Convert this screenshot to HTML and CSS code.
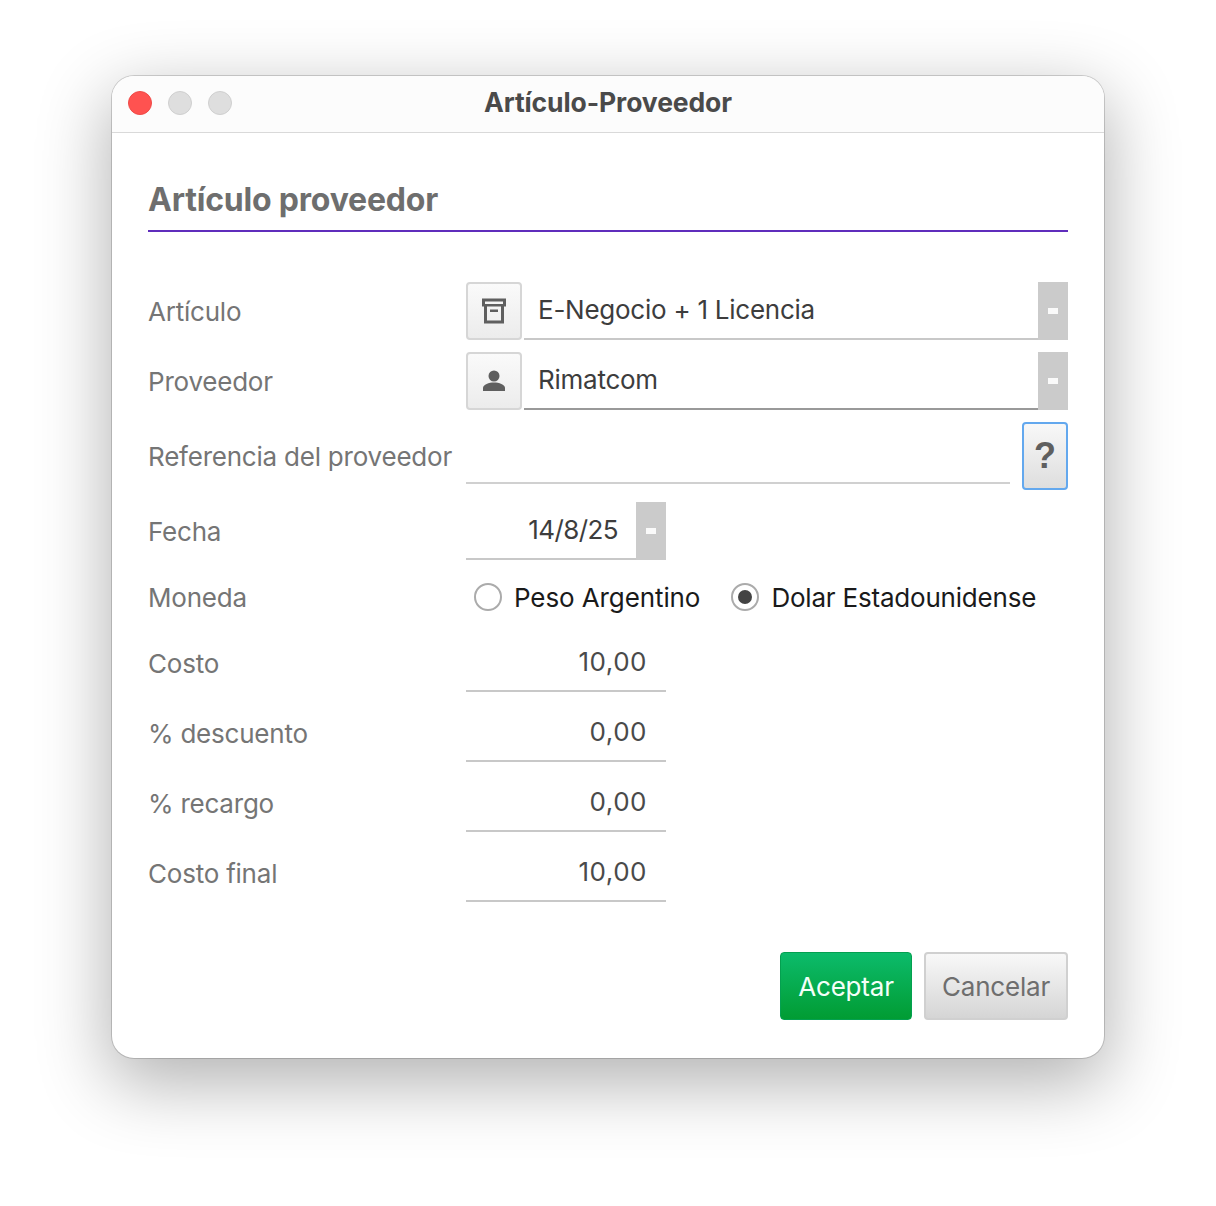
FILE: index.html
```html
<!DOCTYPE html>
<html lang="es">
<head>
<meta charset="utf-8">
<title>Artículo-Proveedor</title>
<link rel="stylesheet" href="styles.css">
</head>
<body>
<div class="window">
  <header class="titlebar">
    <div class="lights">
      <span class="light light-close"></span>
      <span class="light"></span>
      <span class="light"></span>
    </div>
    <div class="title">Artículo-Proveedor</div>
  </header>
  <main class="content">
    <h1 class="heading">Artículo proveedor</h1>
    <form class="form">
      <div class="label">Artículo</div>
      <div class="field-row">
        <button type="button" class="icon-btn">
          <svg width="26" height="26" viewBox="0 0 26 26"><path fill="#5f5f5f" fill-rule="evenodd" d="M1 0.500h24v8h-2v17H3v-17H1zM4 3.500v2.500h18V3.500zM6 8.500v14h14v-14zM9 11.500h8v2.500H9z"/></svg>
        </button>
        <div class="lookup lookup-light"><span class="lookup-text">E-Negocio + 1 Licencia</span><span class="clear"><i></i></span></div>
      </div>

      <div class="label">Proveedor</div>
      <div class="field-row">
        <button type="button" class="icon-btn">
          <svg width="26" height="26" viewBox="0 0 26 26"><circle cx="13" cy="8" r="5.500" fill="#5f5f5f"/><path fill="#5f5f5f" d="M2 23v-3c0-3.500 6-5.500 11-5.500S24 16.500 24 20v3z"/></svg>
        </button>
        <div class="lookup lookup-dark"><span class="lookup-text">Rimatcom</span><span class="clear"><i></i></span></div>
      </div>

      <div class="label label-ref">Referencia del proveedor</div>
      <div class="field-row ref-row">
        <div class="ref-input"></div>
        <button type="button" class="help-btn">?</button>
      </div>

      <div class="label">Fecha</div>
      <div class="date"><span class="date-text">14/8/25</span><span class="clear clear-date"><i></i></span></div>

      <div class="label label-radio">Moneda</div>
      <div class="radios">
        <span class="radio"></span><span class="radio-text">Peso Argentino</span>
        <span class="radio radio-on"></span><span class="radio-text">Dolar Estadounidense</span>
      </div>

      <div class="label">Costo</div>
      <div class="number">10,00</div>
      <div class="label">% descuento</div>
      <div class="number">0,00</div>
      <div class="label">% recargo</div>
      <div class="number">0,00</div>
      <div class="label">Costo final</div>
      <div class="number">10,00</div>
    </form>
    <div class="actions">
      <button type="button" class="btn btn-ok">Aceptar</button>
      <button type="button" class="btn btn-cancel">Cancelar</button>
    </div>
  </main>
</div>
</body>
</html>
```
FILE: styles.css
```css
* { box-sizing: border-box; }
html, body { margin: 0; height: 100%; }
body {
  background: #fff;
  padding: 76px 112px 0;
  font-family: Inter, "Liberation Sans", sans-serif;
  overflow: hidden;
}
.window {
  width: 992px;
  height: 982px;
  background: #fff;
  border-radius: 22px;
  box-shadow: 0 0 0 1px rgba(0,0,0,.16), 0 22px 70px 4px rgba(0,0,0,.3);
  overflow: hidden;
}
.titlebar {
  height: 57px;
  background: #fcfcfc;
  border-bottom: 1px solid #d9d9d9;
  display: flex;
  align-items: center;
  justify-content: center;
  position: relative;
}
.lights {
  position: absolute;
  left: 16px;
  top: 15px;
  display: flex;
  gap: 16px;
}
.light {
  width: 24px;
  height: 24px;
  border-radius: 50%;
  background: #dedede;
  border: 1px solid #cfcfcf;
}
.light-close { background: #ff5250; border-color: #ef4a47; }
.title {
  font-size: 26.5px;
  font-weight: 700;
  color: #4a4a4a;
  margin-top: -5px;
  letter-spacing: -.1px;
}
.content { padding: 0 36px; }
.heading {
  margin: 0;
  height: 42px;
  margin-top: 46px;
  padding-top: 2px;
  font-size: 32px;
  line-height: 38px;
  font-weight: 700;
  color: #6e6e6e;
  letter-spacing: -.2px;
}
.heading::after {
  content: "";
  display: block;
  height: 2px;
  margin-top: 11px;
  background: #5f2dbc;
}
.form {
  display: grid;
  grid-template-columns: 318px 602px;
  row-gap: 12px;
  margin-top: 61px;
  align-items: center;
}
.label {
  font-size: 26px;
  color: #757575;
  padding-top: 1px;
  white-space: nowrap;
  letter-spacing: -.22px;
}
.label-ref { padding-top: 0; }
.label-radio { padding-top: 0; }
.field-row { display: flex; height: 58px; }
.icon-btn {
  width: 56px;
  height: 58px;
  padding: 0;
  margin-right: 2px;
  border: 2px solid #d6d6d6;
  border-radius: 4px;
  background: linear-gradient(#fafafa, #ececec);
  display: flex;
  align-items: center;
  justify-content: center;
}
.lookup {
  flex: 1;
  display: flex;
  align-items: center;
  border-bottom: 2px solid #c8c8c8;
}
.lookup-dark { border-bottom-color: #999; }
.lookup-text {
  flex: 1;
  padding-left: 14px;
  padding-bottom: 2px;
  font-size: 26px;
  color: #3d3d3d;
  letter-spacing: -.25px;
}
.clear {
  width: 30px;
  height: 58px;
  margin-bottom: -2px;
  background: #cbcbcb;
  display: flex;
  align-items: center;
  justify-content: center;
}
.clear i {
  display: block;
  width: 10px;
  height: 6px;
  background: #fafafa;
}
.ref-row { height: 68px; align-items: flex-end; justify-content: space-between; }
.ref-input {
  width: 544px;
  height: 60px;
  margin-bottom: 6px;
  border-bottom: 2px solid #d0d0d0;
}
.help-btn {
  width: 46px;
  height: 68px;
  padding: 0;
  border: 2px solid #63a8ee;
  border-radius: 4px;
  background: linear-gradient(#f8f8f8, #dedede);
  color: #5f5f5f;
  font-family: "Liberation Sans", sans-serif;
  font-size: 36px;
  font-weight: 700;
}
.date {
  width: 200px;
  height: 58px;
  display: flex;
  align-items: center;
  justify-content: flex-end;
  border-bottom: 2px solid #c8c8c8;
}
.date-text {
  font-size: 26px;
  color: #3d3d3d;
  padding-right: 18px;
  padding-bottom: 2px;
  letter-spacing: -.6px;
}
.radios {
  height: 50px;
  display: flex;
  align-items: center;
  padding-left: 8px;
}
.radio {
  flex: none;
  width: 28px;
  height: 28px;
  border-radius: 50%;
  border: 2px solid #ababab;
  background: #fff;
  display: flex;
  align-items: center;
  justify-content: center;
  margin-top: -1px;
}
.radio-on { margin-left: -1px; }
.radio-on::after {
  content: "";
  width: 14px;
  height: 14px;
  border-radius: 50%;
  background: #444;
}
.radio-text {
  font-size: 26px;
  color: #1a1a1a;
  margin-left: 12px;
  margin-right: 32px;
  white-space: nowrap;
  letter-spacing: -.1px;
}
.radio-text:last-child { margin-right: 0; letter-spacing: -.2px; }
.number {
  width: 200px;
  height: 58px;
  padding: 0 19px 0 0;
  line-height: 56px;
  text-align: right;
  font-size: 26px;
  color: #4a4a4a;
  border-bottom: 2px solid #c8c8c8;
  letter-spacing: .5px;
}
.actions {
  display: flex;
  justify-content: flex-end;
  gap: 12px;
  margin-top: 50px;
}
.btn {
  height: 68px;
  border-radius: 4px;
  font-family: inherit;
  font-size: 26px;
  padding: 0;
  letter-spacing: -.2px;
}
.btn-ok {
  width: 132px;
  border: 1px solid #04a050;
  background: linear-gradient(#0cbb6b, #019c33);
  color: #f4fff8;
}
.btn-cancel {
  width: 144px;
  border: 2px solid #d0d0d0;
  background: linear-gradient(#f8f8f8, #d5d5d5);
  color: #6e6e6e;
}
```
